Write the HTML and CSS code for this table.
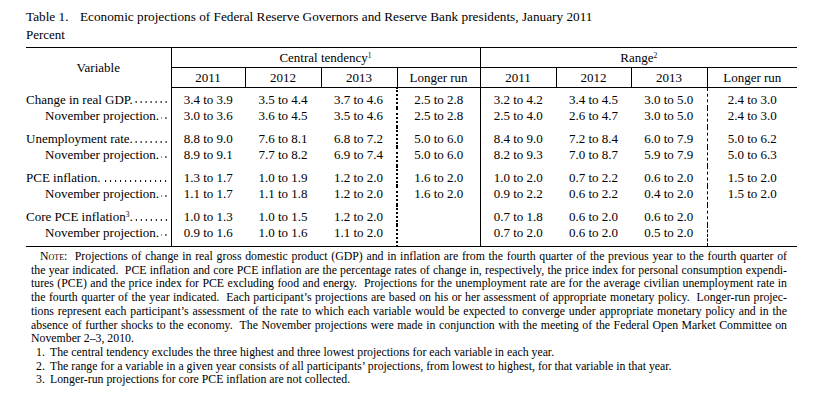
FILE: index.html
```html
<!DOCTYPE html>
<html lang="en">
<head>
<meta charset="utf-8">
<title>Table 1</title>
<link rel="stylesheet" href="styles.css">
</head>
<body>
<div class="page">
  <div class="title"><span class="tnum">Table 1.</span>Economic projections of Federal Reserve Governors and Reserve Bank presidents, January 2011</div>
  <div class="unit">Percent</div>
  <table class="proj">
    <colgroup>
      <col class="w-var"><col class="w-74"><col class="w-76"><col class="w-76"><col class="w-83">
      <col class="w-76"><col class="w-75"><col class="w-76"><col class="w-90">
    </colgroup>
    <thead>
      <tr class="hr1">
        <th rowspan="2" class="hvar">Variable</th>
        <th colspan="4" class="hgrp hgrp-c">Central tendency<sup>1</sup></th>
        <th colspan="4" class="hgrp">Range<sup>2</sup></th>
      </tr>
      <tr class="hr2">
        <th class="hy">2011</th><th class="hy">2012</th><th class="hy">2013</th><th class="hy hy-end">Longer run</th>
        <th class="hy">2011</th><th class="hy">2012</th><th class="hy">2013</th><th class="hy hy-last">Longer run</th>
      </tr>
    </thead>
    <tbody>
      <tr class="first">
        <td class="lab"><div class="lw"><span class="lt">Change in real GDP.</span><span class="dots"></span></div></td>
        <td>3.4 to 3.9</td><td>3.5 to 4.4</td><td class="dot">3.7 to 4.6</td><td class="end">2.5 to 2.8</td>
        <td>3.2 to 4.2</td><td>3.4 to 4.5</td><td class="dash">3.0 to 5.0</td><td>2.4 to 3.0</td>
      </tr>
      <tr class="second">
        <td class="lab"><div class="lw sub"><span class="lt">November projection.</span><span class="dots"></span></div></td>
        <td>3.0 to 3.6</td><td>3.6 to 4.5</td><td class="dot">3.5 to 4.6</td><td class="end">2.5 to 2.8</td>
        <td>2.5 to 4.0</td><td>2.6 to 4.7</td><td class="dash">3.0 to 5.0</td><td>2.4 to 3.0</td>
      </tr>
      <tr class="first">
        <td class="lab"><div class="lw"><span class="lt">Unemployment rate.</span><span class="dots"></span></div></td>
        <td>8.8 to 9.0</td><td>7.6 to 8.1</td><td class="dot">6.8 to 7.2</td><td class="end">5.0 to 6.0</td>
        <td>8.4 to 9.0</td><td>7.2 to 8.4</td><td class="dash">6.0 to 7.9</td><td>5.0 to 6.2</td>
      </tr>
      <tr class="second">
        <td class="lab"><div class="lw sub"><span class="lt">November projection.</span><span class="dots"></span></div></td>
        <td>8.9 to 9.1</td><td>7.7 to 8.2</td><td class="dot">6.9 to 7.4</td><td class="end">5.0 to 6.0</td>
        <td>8.2 to 9.3</td><td>7.0 to 8.7</td><td class="dash">5.9 to 7.9</td><td>5.0 to 6.3</td>
      </tr>
      <tr class="first">
        <td class="lab"><div class="lw"><span class="lt">PCE inflation.</span><span class="dots"></span></div></td>
        <td>1.3 to 1.7</td><td>1.0 to 1.9</td><td class="dot">1.2 to 2.0</td><td class="end">1.6 to 2.0</td>
        <td>1.0 to 2.0</td><td>0.7 to 2.2</td><td class="dash">0.6 to 2.0</td><td>1.5 to 2.0</td>
      </tr>
      <tr class="second">
        <td class="lab"><div class="lw sub"><span class="lt">November projection.</span><span class="dots"></span></div></td>
        <td>1.1 to 1.7</td><td>1.1 to 1.8</td><td class="dot">1.2 to 2.0</td><td class="end">1.6 to 2.0</td>
        <td>0.9 to 2.2</td><td>0.6 to 2.2</td><td class="dash">0.4 to 2.0</td><td>1.5 to 2.0</td>
      </tr>
      <tr class="first">
        <td class="lab"><div class="lw"><span class="lt">Core PCE inflation<sup>3</sup>.</span><span class="dots"></span></div></td>
        <td>1.0 to 1.3</td><td>1.0 to 1.5</td><td class="dot">1.2 to 2.0</td><td class="end"></td>
        <td>0.7 to 1.8</td><td>0.6 to 2.0</td><td class="dash">0.6 to 2.0</td><td></td>
      </tr>
      <tr class="second last">
        <td class="lab"><div class="lw sub"><span class="lt">November projection.</span><span class="dots"></span></div></td>
        <td>0.9 to 1.6</td><td>1.0 to 1.6</td><td class="dot">1.1 to 2.0</td><td class="end"></td>
        <td>0.7 to 2.0</td><td>0.6 to 2.0</td><td class="dash">0.5 to 2.0</td><td></td>
      </tr>
    </tbody>
  </table>
  <div class="notes">
    <div class="nl indent"><span class="sc">Note</span>:&nbsp; Projections of change in real gross domestic product (GDP) and in inflation are from the fourth quarter of the previous year to the fourth quarter of</div>
    <div class="nl">the year indicated.&nbsp; PCE inflation and core PCE inflation are the percentage rates of change in, respectively, the price index for personal consumption expendi-</div>
    <div class="nl">tures (PCE) and the price index for PCE excluding food and energy.&nbsp; Projections for the unemployment rate are for the average civilian unemployment rate in</div>
    <div class="nl">the fourth quarter of the year indicated.&nbsp; Each participant’s projections are based on his or her assessment of appropriate monetary policy.&nbsp; Longer-run projec-</div>
    <div class="nl">tions represent each participant’s assessment of the rate to which each variable would be expected to converge under appropriate monetary policy and in the</div>
    <div class="nl">absence of further shocks to the economy.&nbsp; The November projections were made in conjunction with the meeting of the Federal Open Market Committee on</div>
    <div class="nl nl-end">November 2–3, 2010.</div>
    <div class="fn"><span class="fnum">1.</span>The central tendency excludes the three highest and three lowest projections for each variable in each year.</div>
    <div class="fn"><span class="fnum">2.</span>The range for a variable in a given year consists of all participants’ projections, from lowest to highest, for that variable in that year.</div>
    <div class="fn"><span class="fnum">3.</span>Longer-run projections for core PCE inflation are not collected.</div>
  </div>
</div>
</body>
</html>
```

FILE: styles.css
```css
html, body {
  margin: 0;
  padding: 0;
  background: #fff;
}
body {
  font-family: "Liberation Serif", "Times New Roman", serif;
  color: #000;
}
.page {
  padding: 9px 0 0 26px;
}
.title {
  font-size: 13.25px;
  line-height: 16px;
  white-space: nowrap;
}
.tnum {
  display: inline-block;
  width: 54px;
}
.unit {
  font-size: 13px;
  line-height: 16px;
  margin-top: 2px;
}
.proj {
  margin-top: 4px;
  border-collapse: collapse;
  table-layout: fixed;
  width: 771px;
  font-family: "Liberation Serif", "Times New Roman", serif;
  font-size: 13px;
  border-top: 1px solid #000;
  border-bottom: 1px solid #000;
}
.w-var { width: 145px; }
.w-74 { width: 74px; }
.w-75 { width: 75px; }
.w-76 { width: 76px; }
.w-83 { width: 83px; }
.w-90 { width: 90px; }

.proj th {
  font-weight: normal;
  padding: 0;
  line-height: 19px;
  height: 19px;
  text-align: center;
}
.hvar {
  border-right: 1px solid #000;
  vertical-align: middle;
}
.hgrp {
  border-bottom: 1px solid #000;
}
.hgrp-c {
  border-right: 1px solid #000;
}
.hy {
  border-bottom: 1px solid #000;
  border-right: 1px solid #000;
}
.hy-last {
  border-right: none;
}
sup {
  font-size: 7.5px;
  line-height: 0;
  vertical-align: 4px;
}
.proj td {
  padding: 0;
  line-height: 15.5px;
  text-align: center;
  white-space: nowrap;
}
.proj tr.first td {
  padding-top: 4px;
}
.proj tr.second td {
  padding-bottom: 4px;
}
.proj tr.last td {
  padding-bottom: 6px;
}
.proj td.lab {
  text-align: left;
  border-right: 1px solid #000;
}
.lw {
  display: flex;
  align-items: stretch;
  padding-right: 2px;
}
.lw.sub {
  padding-left: 19px;
}
.lw .lt {
  flex: none;
}
.lw .dots {
  flex: 1 1 auto;
  min-width: 0;
  margin-left: 2px;
  background-image: radial-gradient(circle, #000 0.8px, transparent 1.1px);
  background-size: 5px 4px;
  background-repeat: repeat-x;
  background-position: right 0 bottom 3px;
}
.proj td.dot {
  border-right: 2px dotted #000;
}
.proj td.end {
  border-right: 1px solid #000;
}
.proj td.dash {
  border-right: 1px dashed #000;
}
.notes {
  margin: 3px 0 0 5px;
  width: 756px;
  font-family: "Liberation Serif", "Times New Roman", serif;
  font-size: 11.8px;
  line-height: 13.7px;
}
.nl {
  text-align: justify;
  text-align-last: justify;
  white-space: nowrap;
}
.nl.indent {
  padding-left: 9px;
}
.nl.nl-end {
  text-align-last: left;
}
.sc {
  font-variant: small-caps;
}
.fn {
  padding-left: 5px;
  white-space: nowrap;
}
.fnum {
  display: inline-block;
  width: 14px;
}
```
